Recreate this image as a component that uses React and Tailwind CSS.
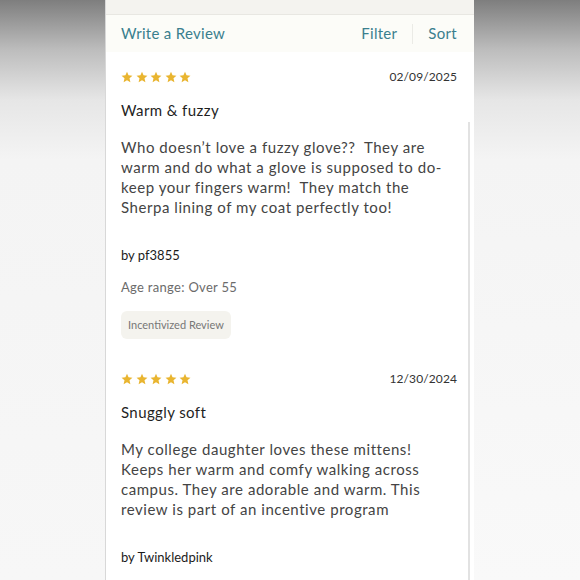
import React from 'react';

const reviews = [
  {
    date: '02/09/2025',
    title: 'Warm & fuzzy',
    lines: [
      'Who doesn\u2019t love a fuzzy glove??\u00a0 They are',
      'warm and do what a glove is supposed to do-',
      'keep your fingers warm!\u00a0 They match the',
      'Sherpa lining of my coat perfectly too!',
    ],
    author: 'pf3855',
    age: 'Over 55',
    incentivized: true,
  },
  {
    date: '12/30/2024',
    title: 'Snuggly soft',
    lines: [
      'My college daughter loves these mittens!',
      'Keeps her warm and comfy walking across',
      'campus. They are adorable and warm. This',
      'review is part of an incentive program',
    ],
    author: 'Twinkledpink',
  },
];

const Star = () => (
  <svg width="12" height="12" viewBox="0 0 24 24" className="fill-[#e9b530]">
    <path d="M12 1.5l3.1 7.2 7.8.7-5.9 5.2 1.8 7.7L12 18.3l-6.8 4 1.8-7.7L1.1 9.4l7.8-.7z" />
  </svg>
);

const Review = ({ review, first }) => (
  <div className={first ? 'pt-[16px]' : 'pt-[31px]'}>
    <div className="flex h-[18px] items-center justify-between">
      <div className="flex gap-[2.5px]">
        {[0, 1, 2, 3, 4].map((i) => <Star key={i} />)}
      </div>
      <span className="text-[12px] text-[#333] tracking-[0.1px]">{review.date}</span>
    </div>
    <div className="mt-[14px] h-[20px] text-[15px] leading-[20px] text-[#1f1f1f] tracking-[0.4px]">{review.title}</div>
    <div className="mt-[17px] text-[15px] leading-[20px] text-[#444] tracking-[0.55px]">
      {review.lines.map((l) => <div key={l} className="whitespace-pre">{l}</div>)}
    </div>
    <div className="mt-[29px] h-[18px] text-[13px] leading-[18px] text-[#1c1c1c]">by {review.author}</div>
    {review.age && (
      <div className="mt-[14px] h-[18px] text-[13px] leading-[18px] text-[#6b6b6b] tracking-[0.3px]">Age range: {review.age}</div>
    )}
    {review.incentivized && (
      <div className="mt-[15px] inline-flex h-[28px] items-center rounded-[6px] bg-[#f4f3ee] px-[7px] text-[11px] text-[#777]">
        Incentivized Review
      </div>
    )}
  </div>
);

export default function App() {
  return (
    <div className="flex h-[580px] w-[580px] overflow-hidden font-['Lato','Liberation_Sans',sans-serif]">
      <div className="w-[106px] border-r border-[#d8d8d8] bg-[linear-gradient(to_bottom,#7e7e7e_0px,#bdbdbd_50px,#e6e6e6_100px,#f4f4f4_160px,#f7f7f7_100%)]" />
      <div className="relative w-[368px] bg-white">
        <div className="h-[15px] border-b border-[#e8e7e2] bg-[#f4f3ef]" />
        <div className="flex h-[37px] items-center bg-[#fcfcf8] pl-[15px] pr-[17px] text-[15px] text-[#3a7f8e] tracking-[0.3px]">
          <span>Write a Review</span>
          <span className="ml-auto">Filter</span>
          <span className="mx-[15px] h-[20px] w-px bg-[#ebebe6]" />
          <span>Sort</span>
        </div>
        <div className="pl-[15px] pr-[17px]">
          {reviews.map((r, i) => <Review key={r.date} review={r} first={i === 0} />)}
        </div>
        <div className="absolute right-[4px] top-[122px] bottom-0 w-[2px] bg-[#e2e2e2]" />
      </div>
      <div className="flex-1 bg-[linear-gradient(to_bottom,#7e7e7e_0px,#bdbdbd_50px,#e6e6e6_100px,#f4f4f4_160px,#f9f9f9_100%)]" />
    </div>
  );
}
